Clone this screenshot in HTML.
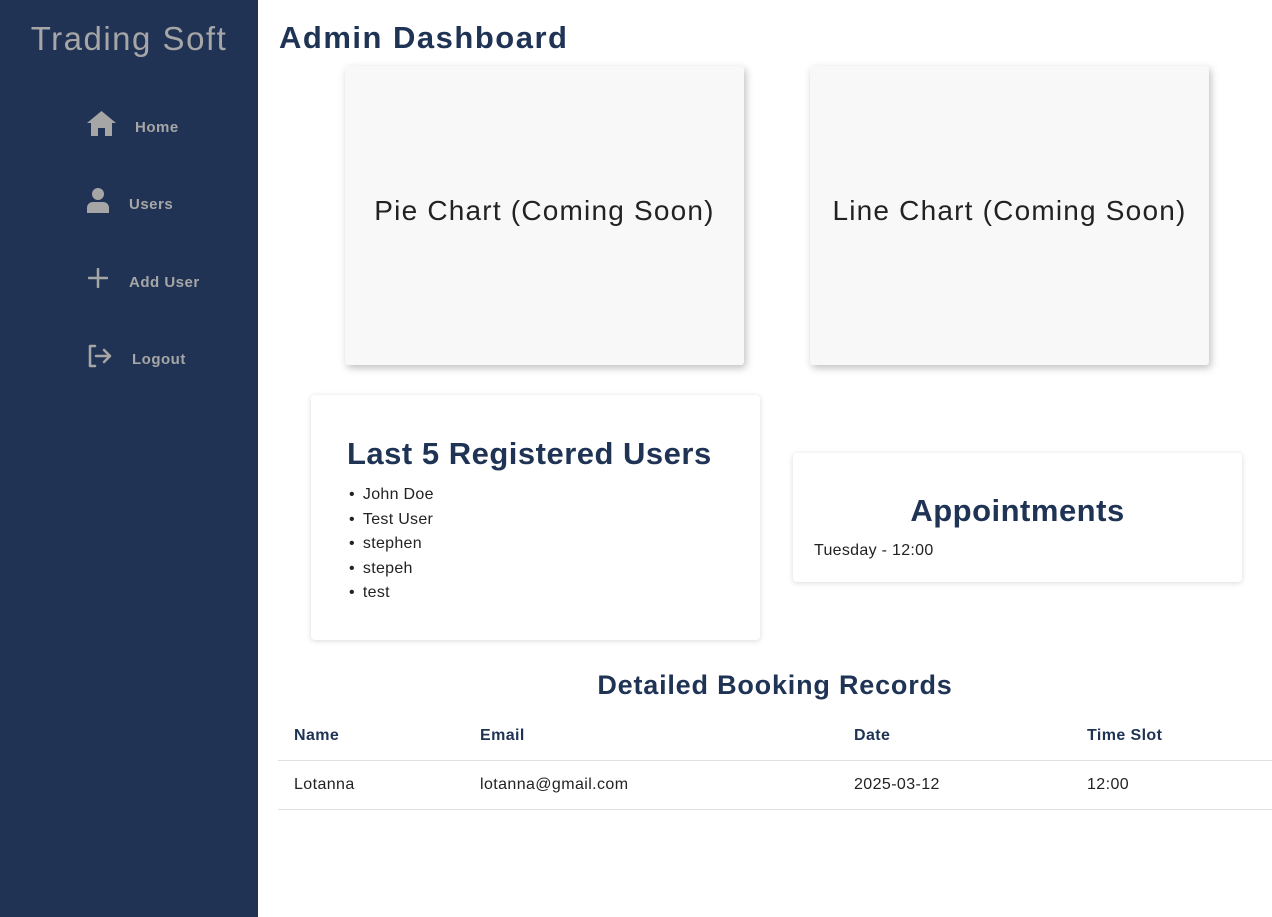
<!DOCTYPE html>
<html><head><style>
*{margin:0;padding:0;box-sizing:border-box}
body{width:1272px;height:917px;position:relative;background:#fff;font-family:"Liberation Sans",sans-serif;overflow:hidden}
.sb{position:absolute;left:0;top:0;width:258px;height:917px;background:#203354}
.logo{position:absolute;left:0;width:258px;top:20px;text-align:center;font-size:33px;color:#a6a6a6;letter-spacing:1.5px}
.nav{position:absolute;color:#a6a6a6;font-weight:bold;font-size:15px;letter-spacing:.5px}
.ab{position:absolute}
h1{position:absolute;left:279px;top:20px;font-size:31px;color:#1f3354;font-weight:bold;letter-spacing:1.5px}
.chart{position:absolute;background:#f8f8f8;box-shadow:2px 3px 8px rgba(0,0,0,.25);border-radius:3px;display:flex;align-items:center;justify-content:center;font-size:28px;color:#222;letter-spacing:1.2px;padding-bottom:10px}
.card{position:absolute;background:#fff;box-shadow:0 1px 6px rgba(0,0,0,.15);border-radius:4px}
.card h2{color:#1f3354;font-size:31px;font-weight:bold;letter-spacing:.5px}
ul{list-style:none;font-size:16px;color:#222;letter-spacing:.3px}
li{height:24.5px}
li:before{content:"•";margin-right:8px}
table{position:absolute;left:278px;top:712px;width:994px;border-collapse:collapse;font-size:16px;color:#222;letter-spacing:.4px}
th{text-align:left;color:#1f3354;font-weight:bold;height:48px;padding-left:16px;border-bottom:1px solid #e0e0e0}
td{height:49px;padding-left:16px;border-bottom:1px solid #e0e0e0}
</style></head><body>
<div class="sb">
<div class="logo">Trading Soft</div>
<svg class="ab" style="left:87px;top:111px" width="29" height="25" viewBox="0 0 29 25"><path d="M14.5 0L0 12h4v13h7v-8h7v8h7V12h4z" fill="#a6a6a6"/></svg>
<div class="nav" style="left:135px;top:119px">Home</div>
<svg class="ab" style="left:87px;top:188px" width="22" height="25" viewBox="0 0 22 25"><circle cx="11" cy="6" r="6" fill="#a6a6a6"/><path d="M0 25v-5c0-4 3-6 6-6h10c3 0 6 2 6 6v5z" fill="#a6a6a6"/></svg>
<div class="nav" style="left:129px;top:196px">Users</div>
<svg class="ab" style="left:88px;top:268px" width="20" height="20" viewBox="0 0 20 20"><path d="M10 1v18M1 10h18" stroke="#a6a6a6" stroke-width="2.5" stroke-linecap="round"/></svg>
<div class="nav" style="left:129px;top:274px">Add User</div>
<svg class="ab" style="left:87px;top:344px" width="26" height="24" viewBox="0 0 26 24"><path d="M8 2H3v20h5" stroke="#a6a6a6" stroke-width="2.5" fill="none" stroke-linecap="round" stroke-linejoin="round"/><path d="M9 12h14M17 6l6 6-6 6" stroke="#a6a6a6" stroke-width="2.5" fill="none" stroke-linecap="round" stroke-linejoin="round"/></svg>
<div class="nav" style="left:132px;top:351px">Logout</div>
</div>
<h1>Admin Dashboard</h1>
<div class="chart" style="left:345px;top:66px;width:399px;height:299px">Pie Chart (Coming Soon)</div>
<div class="chart" style="left:810px;top:66px;width:399px;height:299px">Line Chart (Coming Soon)</div>
<div class="card" style="left:311px;top:395px;width:449px;height:245px">
<h2 style="position:absolute;left:36px;top:41px">Last 5 Registered Users</h2>
<ul style="position:absolute;left:38px;top:91px"><li>John Doe</li><li>Test User</li><li>stephen</li><li>stepeh</li><li>test</li></ul>
</div>
<div class="card" style="left:793px;top:453px;width:449px;height:129px">
<h2 style="position:absolute;left:0;width:449px;text-align:center;top:40px">Appointments</h2>
<div style="position:absolute;left:21px;top:89px;font-size:16px;color:#222;letter-spacing:.3px">Tuesday - 12:00</div>
</div>
<div style="position:absolute;left:278px;width:994px;top:670px;text-align:center;font-size:27px;font-weight:bold;color:#1f3354;letter-spacing:.8px">Detailed Booking Records</div>
<table><tr><th style="width:186px">Name</th><th style="width:374px">Email</th><th style="width:233px">Date</th><th>Time Slot</th></tr>
<tr><td>Lotanna</td><td>lotanna@gmail.com</td><td>2025-03-12</td><td>12:00</td></tr></table>
</body></html>
